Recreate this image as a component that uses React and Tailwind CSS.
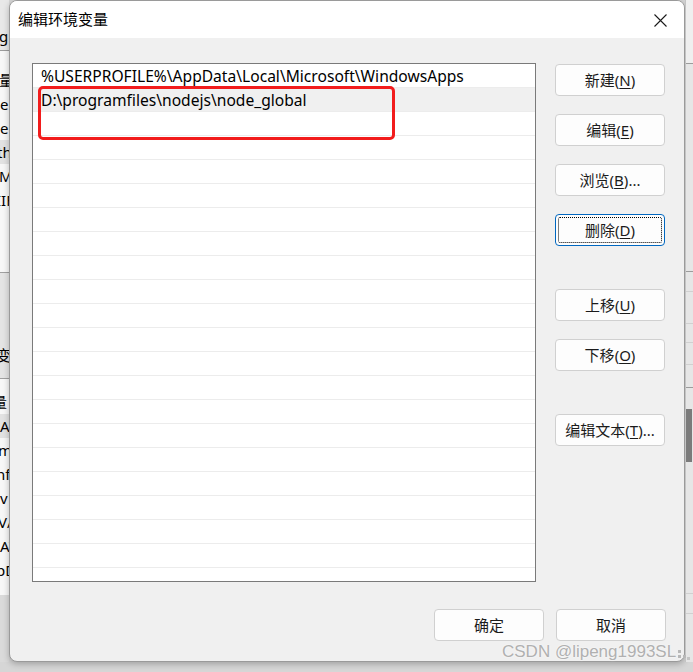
import React from 'react'

const F = 'font-["Noto_Sans","Noto_Sans_CJK_SC",sans-serif]'

const rows = [
  '%USERPROFILE%\\AppData\\Local\\Microsoft\\WindowsApps',
  'D:\\programfiles\\nodejs\\node_global',
  ...Array(20).fill(''),
]

function Btn({ label, hot, tail = '', focused = false, className = '' }) {
  return (
    <button
      className={`relative flex-none w-[110px] h-[32px] rounded-[4px] border bg-[#fdfdfd] text-[15px] text-[#1b1b1b] flex items-center justify-center ${
        focused ? 'border-[#0067c0]' : 'border-[#d0d0d0]'
      } ${className}`}
    >
      <span>
        {label}(<span className="underline underline-offset-2">{hot}</span>){tail}
      </span>
      {focused && (
        <span className="absolute inset-[2px] border border-dotted border-black rounded-[2px]" />
      )}
    </button>
  )
}

function LeftStrip() {
  const cell = 'h-[24px] leading-[24px] whitespace-nowrap'
  return (
    <div className="w-[9px] flex-none h-full overflow-hidden flex flex-col bg-[#dedede] text-[15px] text-black">
      <div className="h-[51px] flex-none bg-[#e8e8e8] border-b border-[#9c9c9c] pt-[24px]">
        <div className={`${cell} -ml-[1px]`}>g</div>
      </div>
      <div className="h-[222px] flex-none bg-[#f7f7f7] border-b border-[#a0a0a0] pt-[17px]">
        <div className={`${cell} -ml-[1px]`}>量</div>
        <div className={cell}>e</div>
        <div className={cell}>e</div>
        <div className={`${cell} -ml-[3px] bg-[#e2e2e2]`}>th</div>
        <div className={`${cell} -ml-[1px]`}>M</div>
        <div className={`${cell} -ml-[4px]`}>IIF</div>
      </div>
      <div className="h-[106px] flex-none bg-[#e4e4e4] border-b border-[#a0a0a0] pt-[70px]">
        <div className={`${cell} -ml-[4px]`}>变</div>
      </div>
      <div className="h-[216px] flex-none bg-[#f7f7f7] pt-[11px]">
        <div className={`${cell} -ml-[8px]`}>量</div>
        <div className={`${cell} bg-[#e2e2e2]`}>A</div>
        <div className={`${cell} -ml-[2px]`}>m</div>
        <div className={`${cell} -ml-[4px]`}>nf</div>
        <div className={cell}>v</div>
        <div className={`${cell} -ml-[2px]`}>V/</div>
        <div className={cell}>AV</div>
        <div className={`${cell} -ml-[4px]`}>pD</div>
        <div className={`${cell} text-[#1a5fb4] -ml-[2px]`}>..</div>
      </div>
      <div className="flex-1 bg-[#dadada]" />
    </div>
  )
}

function RightStrip() {
  return (
    <div className="flex-1 h-full flex flex-col bg-[#e6e6e6] border-l border-[#c4c4c4]">
      <div className="h-[64px] flex-none bg-[#efefef] border-b border-[#9c9c9c]" />
      <div className="h-[208px] flex-none border-b border-[#9c9c9c]" />
      <div className="h-[20px] flex-none border-b border-[#d0d0d0]" />
      <div className="h-[32px] flex-none border-b border-[#d0d0d0]" />
      <div className="h-[19px] flex-none border-b border-[#d0d0d0]" />
      <div className="h-[22px] flex-none border-b border-[#d0d0d0]" />
      <div className="h-[23px] flex-none border-b border-[#9c9c9c]" />
      <div className="h-[206px] flex-none border-b border-[#d0d0d0] pt-[21px]">
        <div className="h-[53px] w-[6px] bg-[#7b7b7b]" />
      </div>
      <div className="h-[20px] flex-none border-b border-[#d0d0d0]" />
      <div className="flex-1" />
    </div>
  )
}

export default function App() {
  return (
    <div className={`relative w-[693px] h-[672px] overflow-hidden bg-[#d6d6d6] ${F}`}>
      <div className="flex h-[662px]">
        <LeftStrip />

        {/* dialog */}
        <div className="w-[676px] flex-none h-full flex flex-col rounded-[8px] border border-[#9a9a9a] overflow-hidden bg-[#f0f0f0] shadow-[0_2px_6px_rgba(0,0,0,0.25)]">
          <div className="h-[37px] flex-none bg-white flex items-center justify-between pl-[8px] pr-[17px]">
            <span className="text-[15px] text-black">编辑环境变量</span>
            <svg width="13" height="13" viewBox="0 0 13 13" className="mt-[1px]">
              <path d="M0.5 0.5 L12.5 12.5 M12.5 0.5 L0.5 12.5" stroke="#1a1a1a" strokeWidth="1.1" />
            </svg>
          </div>

          <div className="flex-1 flex flex-col pt-[25px] pl-[22px] pr-[18px]">
            <div className="flex gap-[19px]">
              {/* list */}
              <div className="relative w-[504px] h-[519px] flex-none border border-[#7a7a7a] bg-white overflow-hidden">
                {rows.map((r, i) => (
                  <div
                    key={i}
                    className={`h-[24px] border-b border-[#ececec] pl-[8px] text-[15.6px] leading-[25px] text-black whitespace-nowrap ${
                      i === 1 ? 'bg-[#f0f0f0]' : ''
                    }`}
                  >
                    {r}
                  </div>
                ))}
                <div className="absolute left-[5px] top-[22px] w-[357px] h-[54px] rounded-[5px] border-[3px] border-[#f21c1c]" />
              </div>

              {/* buttons */}
              <div className="flex flex-col pt-[1px]">
                <Btn label="新建" hot="N" />
                <Btn label="编辑" hot="E" className="mt-[18px]" />
                <Btn label="浏览" hot="B" tail="..." className="mt-[18px]" />
                <Btn label="删除" hot="D" focused className="mt-[18px]" />
                <Btn label="上移" hot="U" className="mt-[43px]" />
                <Btn label="下移" hot="O" className="mt-[18px]" />
                <Btn label="编辑文本" hot="T" tail="..." className="mt-[43px]" />
              </div>
            </div>

            <div className="flex justify-end gap-[12px] mt-[27px]">
              <button className="w-[110px] h-[32px] rounded-[4px] border border-[#d0d0d0] bg-[#fdfdfd] text-[15px] text-[#1b1b1b]">
                确定
              </button>
              <button className="w-[110px] h-[32px] rounded-[4px] border border-[#d0d0d0] bg-[#fdfdfd] text-[15px] text-[#1b1b1b]">
                取消
              </button>
            </div>
          </div>
        </div>

        <RightStrip />
      </div>

      {/* watermark */}
      <div className='absolute left-[502px] top-[643px] flex items-center gap-[2px] font-["Liberation_Sans",sans-serif] text-[17px] leading-[18px] text-[#b0b0b0] [text-shadow:0_0_2px_#fff]'>
        CSDN @lipeng1993SL
        <svg width="12" height="12" viewBox="0 0 12 12" className="mt-[4px]">
          <rect x="0" y="2" width="3" height="3" fill="#b8b8b8" />
          <rect x="0" y="7" width="3" height="3" fill="#b8b8b8" />
          <rect x="5" y="7" width="3" height="3" fill="#b8b8b8" />
          <rect x="9" y="9" width="3" height="3" fill="#c4c4c4" />
        </svg>
      </div>
    </div>
  )
}
